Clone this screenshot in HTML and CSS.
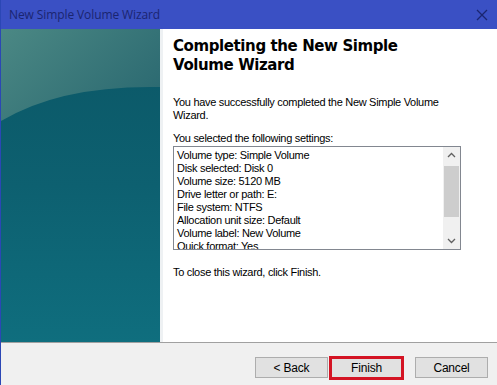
FILE: index.html
```html
<!DOCTYPE html>
<html>
<head>
<meta charset="utf-8">
<link rel="stylesheet" href="styles.css">
</head>
<body>
<div class="window">
  <div class="titlebar">
    <span class="title">New Simple Volume Wizard</span>
    <svg class="close" width="12" height="12" viewBox="0 0 12 12"><path d="M1 1 L11 11 M11 1 L1 11" stroke="#1a2570" stroke-width="1.3" fill="none"/></svg>
  </div>
  <div class="main">
    <div class="side">
      <svg width="159" height="313" viewBox="0 0 159 313" preserveAspectRatio="none">
        <defs>
          <linearGradient id="lower" x1="0" y1="0" x2="0" y2="1">
            <stop offset="0" stop-color="#0b5766"/>
            <stop offset="0.5" stop-color="#0d6070"/>
            <stop offset="1" stop-color="#0f6e7e"/>
          </linearGradient>
          <linearGradient id="upper" x1="0" y1="0" x2="1" y2="0.6">
            <stop offset="0" stop-color="#4b8884"/>
            <stop offset="1" stop-color="#2d6b72"/>
          </linearGradient>
        </defs>
        <rect x="0" y="0" width="159" height="313" fill="url(#lower)"/>
        <path d="M0 0 H159 V58 Q60 56 0 92 Z" fill="url(#upper)"/>
      </svg>
    </div>
    <div class="content">
      <h1 class="heading">Completing the New Simple Volume Wizard</h1>
      <p class="text intro">You have successfully completed the New Simple Volume Wizard.</p>
      <p class="text label">You selected the following settings:</p>
      <div class="listbox">
        <div class="lines">
          <div>Volume type: Simple Volume</div>
          <div>Disk selected: Disk 0</div>
          <div>Volume size: 5120 MB</div>
          <div>Drive letter or path: E:</div>
          <div>File system: NTFS</div>
          <div>Allocation unit size: Default</div>
          <div>Volume label: New Volume</div>
          <div>Quick format: Yes</div>
        </div>
        <div class="scrollbar">
          <svg class="arrow" width="15" height="15" viewBox="0 0 15 15"><path d="M4 9 L7.5 5.5 L11 9" stroke="#606060" stroke-width="1.3" fill="none"/></svg>
          <div class="track"><div class="thumb"></div></div>
          <svg class="arrow" width="15" height="15" viewBox="0 0 15 15"><path d="M4 6 L7.5 9.5 L11 6" stroke="#606060" stroke-width="1.3" fill="none"/></svg>
        </div>
      </div>
      <p class="text closing">To close this wizard, click Finish.</p>
    </div>
  </div>
  <div class="footer">
    <button class="btn back">&lt; Back</button>
    <div class="highlight"><button class="btn">Finish</button></div>
    <button class="btn cancel">Cancel</button>
  </div>
</div>
</body>
</html>
```

FILE: styles.css
```css
html, body {
  margin: 0;
  padding: 0;
  width: 497px;
  height: 385px;
  overflow: hidden;
  background: #f0f0f0;
}
.window {
  width: 496px;
  height: 385px;
  border-left: 1px solid #2b47b5;
  display: flex;
  flex-direction: column;
  font-family: "Liberation Sans", Arial, sans-serif;
}
.titlebar {
  height: 29px;
  flex: none;
  background: #3a50c4;
  display: flex;
  align-items: center;
  justify-content: space-between;
  padding: 0 9px 0 8px;
}
.title {
  font-family: "Open Sans", "Segoe UI", sans-serif;
  font-size: 12px;
  color: #1a2570;
  letter-spacing: -0.1px;
}
.close {
  display: block;
}
.main {
  height: 313px;
  flex: none;
  display: flex;
}
.side {
  width: 159px;
  flex: none;
}
.side svg {
  display: block;
}
.content {
  flex: 1;
  background: #fff;
  border-left: 3px solid #eef1f3;
  padding: 8px 0 0 10px;
}
.heading {
  margin: 0;
  font-family: "DejaVu Sans", Verdana, sans-serif;
  font-weight: bold;
  font-size: 15px;
  letter-spacing: -0.4px;
  line-height: 19px;
  color: #000;
  width: 250px;
}
.text {
  margin: 0;
  font-size: 11px;
  line-height: 13px;
  letter-spacing: -0.3px;
  color: #000;
}
.intro {
  margin-top: 21px;
  width: 290px;
}
.label {
  margin-top: 10px;
}
.listbox {
  margin-top: 1px;
  width: 286px;
  height: 102px;
  border: 1px solid #828790;
  display: flex;
  background: #fff;
}
.lines {
  flex: 1;
  overflow: hidden;
  padding: 2px 0 0 3px;
  font-size: 11px;
  line-height: 13px;
  letter-spacing: -0.3px;
  color: #000;
}
.scrollbar {
  width: 17px;
  flex: none;
  background: #f0f0f0;
  display: flex;
  flex-direction: column;
  align-items: center;
}
.arrow {
  display: block;
  flex: none;
  margin: 1px 0;
}
.track {
  flex: 1;
  width: 15px;
  padding-top: 2px;
}
.thumb {
  width: 15px;
  height: 51px;
  background: #cdcdcd;
}
.closing {
  margin-top: 16px;
}
.footer {
  flex: 1;
  border-top: 1px solid #a0a0a0;
  background: #f0f0f0;
  display: flex;
  align-items: flex-start;
  justify-content: flex-end;
  padding: 14px 9px 0 0;
}
.btn {
  width: 73px;
  height: 21px;
  background: #e1e1e1;
  border: 1px solid #adadad;
  font-family: "Liberation Sans", Arial, sans-serif;
  font-size: 12px;
  letter-spacing: -0.2px;
  color: #000;
  padding: 0;
  margin: 0;
}
.highlight {
  margin: -1px 11px 0 1px;
  border: 3px solid #d41424;
  width: 69px;
  height: 18px;
  overflow: hidden;
  display: flex;
  justify-content: center;
  align-items: center;
}
.highlight .btn {
  border: none;
  flex: none;
  width: 69px;
  height: 18px;
}
```
